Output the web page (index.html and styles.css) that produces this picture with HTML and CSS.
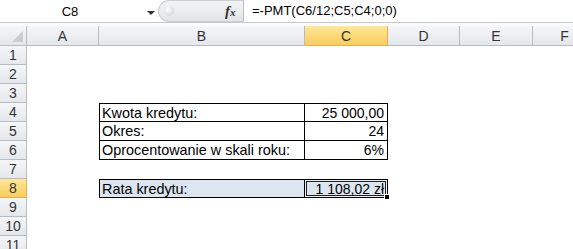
FILE: index.html
```html
<!DOCTYPE html>
<html>
<head>
    <link rel="stylesheet" href="styles.css">
</head>
<body>
<div class="fbar">
    <div class="namebox">
        <span class="name">C8</span>
        <span class="arrow"></span>
    </div>
    <div class="ctrl">
        <span class="knob"></span>
        <span class="fx">f<span class="fx-x">x</span></span>
    </div>
    <div class="formula">=-PMT(C6/12;C5;C4;0;0)</div>
</div>
<div class="spacer"></div>
<table class="sheet">
    <tr class="hdr">
        <th class="corner"><span class="tri"></span></th>
        <th class="w-a">A</th>
        <th class="w-b">B</th>
        <th class="w-c sel">C</th>
        <th class="w-d">D</th>
        <th class="w-e">E</th>
        <th class="w-f">F</th>
    </tr>
    <tr><th>1</th><td></td><td></td><td></td><td></td><td></td><td></td></tr>
    <tr><th>2</th><td></td><td></td><td></td><td></td><td></td><td></td></tr>
    <tr><th>3</th><td></td><td></td><td></td><td></td><td></td><td></td></tr>
    <tr><th>4</th><td></td><td class="lbl first">Kwota kredytu:</td><td class="num first">25 000,00</td><td></td><td></td><td></td></tr>
    <tr><th>5</th><td></td><td class="lbl">Okres:</td><td class="num">24</td><td></td><td></td><td></td></tr>
    <tr><th>6</th><td></td><td class="lbl">Oprocentowanie w skali roku:</td><td class="num">6%</td><td></td><td></td><td></td></tr>
    <tr><th>7</th><td></td><td></td><td></td><td></td><td></td><td></td></tr>
    <tr><th class="sel">8</th><td></td><td class="lbl first blue">Rata kredytu:</td><td class="num first blue active">1 108,02 zł<span class="handle"></span></td><td></td><td></td><td></td></tr>
    <tr><th>9</th><td></td><td></td><td></td><td></td><td></td><td></td></tr>
    <tr><th>10</th><td></td><td></td><td></td><td></td><td></td><td></td></tr>
    <tr><th>11</th><td></td><td></td><td></td><td></td><td></td><td></td></tr>
</table>
</body>
</html>
```

FILE: styles.css
```css
body {
    margin: 0;
    background-color: white;
    font-family: "Liberation Sans", Arial, sans-serif;
    overflow: hidden;
}
/* formula bar */
.fbar {
    display: flex;
    height: 22px;
    border-bottom: 1px solid #c4c8cd;
    background-color: white;
}
.namebox {
    width: 158px;
    position: relative;
    display: flex;
    align-items: center;
}
.name {
    width: 140px;
    text-align: center;
    font-size: 13px;
    color: #000;
}
.arrow {
    position: absolute;
    left: 147px;
    top: 11px;
    border-left: 4px solid transparent;
    border-right: 4px solid transparent;
    border-top: 4px solid #333;
}
.ctrl {
    width: 86px;
    position: relative;
    background: linear-gradient(#f2f3f5, #e3e5e8);
    border: 1px solid #c9ccd1;
    border-right: 1px solid #b9bdc3;
    border-radius: 11px 0 0 11px;
    box-sizing: border-box;
}
.knob {
    position: absolute;
    left: 5px;
    top: 5px;
    width: 10px;
    height: 10px;
    border-radius: 50%;
    background: radial-gradient(circle at 40% 35%, #ffffff, #c8cbd0);
}
.fx {
    position: absolute;
    left: 66px;
    top: 2px;
    font-family: "Liberation Serif", serif;
    font-style: italic;
    font-weight: bold;
    font-size: 15px;
    color: #333;
}
.fx-x {
    font-size: 11px;
}
.formula {
    flex: 1;
    padding-left: 8px;
    font-size: 13px;
    line-height: 22px;
    color: #000;
}
.spacer {
    height: 3px;
    background-color: #fbfbfc;
}
/* sheet grid */
.sheet {
    border-collapse: separate;
    border-spacing: 0;
    table-layout: fixed;
    width: 597px;
}
.sheet th, .sheet td {
    box-sizing: border-box;
    padding: 0;
    height: 19px;
    font-weight: normal;
    white-space: nowrap;
    overflow: hidden;
}
.sheet th {
    background: linear-gradient(#f5f6f8, #e4e7eb);
    border-right: 1px solid #b7bcc3;
    border-bottom: 1px solid #b7bcc3;
    color: #333;
    font-size: 14px;
    text-align: center;
}
.hdr th {
    height: 20px;
}
.sheet th.sel {
    background: linear-gradient(#fde79a, #f8cd5c);
    border-right-color: #e6b04a;
    border-bottom-color: #e6b04a;
}
.corner {
    position: relative;
    width: 27px;
}
.tri {
    position: absolute;
    right: 3px;
    bottom: 3px;
    border-left: 11px solid transparent;
    border-bottom: 11px solid #c9ccd1;
}
.w-a { width: 72px; }
.w-b { width: 206px; }
.w-c { width: 83px; }
.w-d { width: 72px; }
.w-e { width: 73px; }
.w-f { width: 64px; }
/* loan table cells */
.lbl, .num {
    font-size: 14px;
    color: #000;
    border-right: 1px solid #000;
    border-bottom: 1px solid #000;
}
.lbl {
    font-size: 14.4px;
    border-left: 1px solid #000;
    padding-left: 2px !important;
}
.num {
    text-align: right;
    padding-right: 3px !important;
}
.first {
    border-top: 1px solid #000;
}
.blue {
    background-color: #dce6f1;
}
.active {
    position: relative;
    overflow: visible !important;
    box-shadow: inset 0 0 0 1px #e9eef5, inset 0 0 0 2px #222;
}
.handle {
    position: absolute;
    right: -3px;
    bottom: -3px;
    width: 4px;
    height: 4px;
    background-color: #000;
    border: 1px solid white;
}
```
